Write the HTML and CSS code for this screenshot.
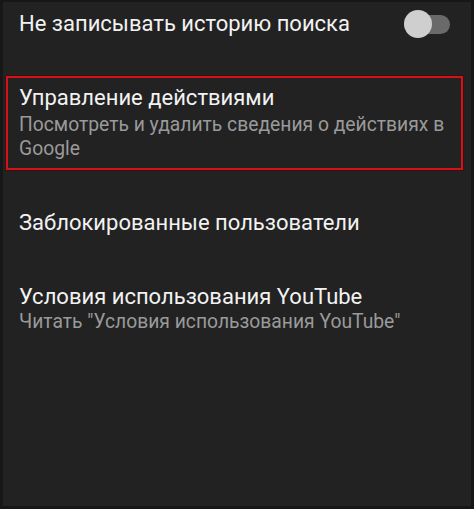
FILE: index.html
```html
<!DOCTYPE html>
<html>
<head>
<meta name="viewport" content="width=device-width, minimum-scale=1.0">
<link rel="stylesheet" href="styles.css">
</head>
<body>
<div class="screen">
  <div class="row row-switch">
    <div class="title">Не записывать историю поиска</div>
    <div class="switch"><div class="track"></div><div class="thumb"></div></div>
  </div>
  <div class="row row-marked">
    <div class="title">Управление действиями</div>
    <div class="subtitle">Посмотреть и удалить сведения о действиях в Google</div>
  </div>
  <div class="row row-single">
    <div class="title">Заблокированные пользователи</div>
  </div>
  <div class="row row-terms">
    <div class="title">Условия использования YouTube</div>
    <div class="subtitle">Читать "Условия использования YouTube"</div>
  </div>
</div>
</body>
</html>
```

FILE: styles.css
```css
html, body {
  margin: 0;
  height: 100%;
}

body {
  background-color: #171717;
  padding: 2px 3px 3px 3px;
  box-sizing: border-box;
  overflow: hidden;
}

.screen {
  background-color: #222222;
  height: 100%;
  display: flex;
  flex-direction: column;
  font-family: Roboto, "Noto Sans", sans-serif;
}

.title {
  color: #f2f2f2;
  font-size: 22px;
  line-height: 26px;
}

.subtitle {
  color: #9a9a9a;
  font-size: 19.3px;
  line-height: 23px;
}

.row {
  padding: 0 16px;
}

.row-switch {
  display: flex;
  align-items: center;
  justify-content: space-between;
  padding-top: 6px;
  height: 32px;
}

.switch {
  position: relative;
  width: 46px;
  height: 28px;
  margin-right: 5px;
}

.track {
  position: absolute;
  left: 8px;
  top: 5px;
  width: 38px;
  height: 19px;
  border-radius: 10px;
  background-color: #6a6a6a;
}

.thumb {
  position: absolute;
  left: 0;
  top: 0;
  width: 28px;
  height: 28px;
  border-radius: 50%;
  background-color: #cfcfcf;
}

.row-marked {
  margin: 36px 8px 0 3px;
  padding: 7px 0 7px 11px;
  border: 2px solid #d3121a;
  box-shadow: 0 0 0 1px #3a1012;
}

.row-marked .subtitle {
  margin-top: 2px;
  line-height: 24px;
}

.row-single {
  padding-top: 40px;
}

.row-terms {
  padding-top: 48px;
}
```
